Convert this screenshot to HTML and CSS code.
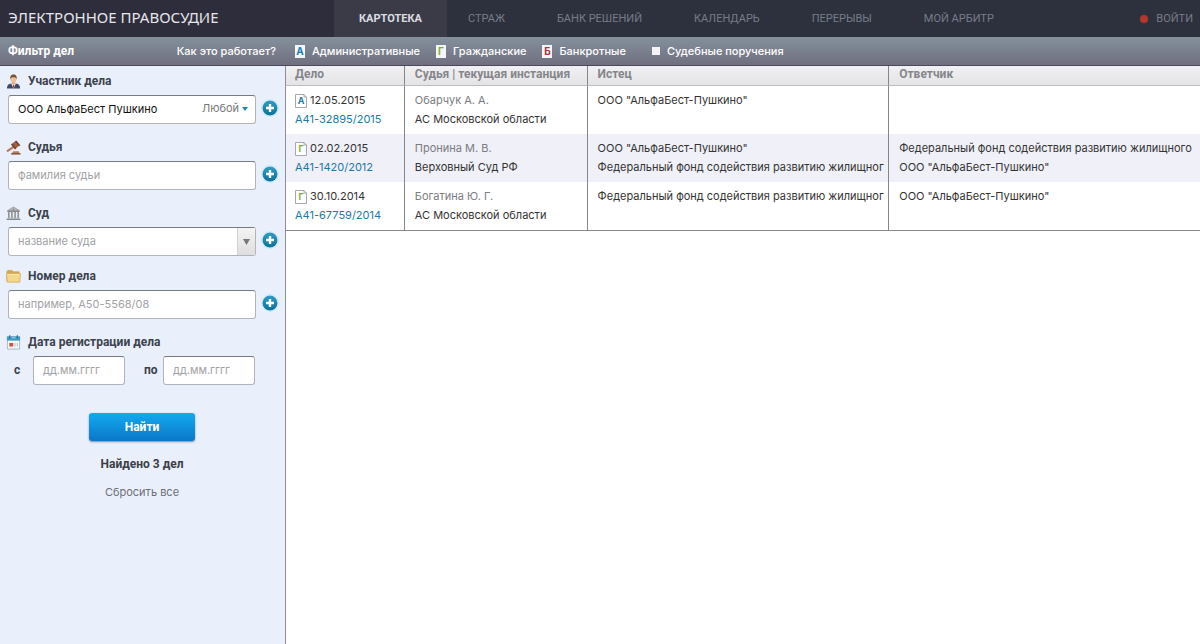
FILE: index.html
```html
<!DOCTYPE html>
<html lang="ru">
<head>
<meta charset="utf-8">
<title>Электронное правосудие — Картотека</title>
<link rel="stylesheet" href="styles.css">
</head>
<body>
<svg class="defs" aria-hidden="true">
  <defs>
    <linearGradient id="plus-fill" x1="0" y1="0" x2="0" y2="1">
      <stop offset="0" stop-color="#2f9cc6"/><stop offset="1" stop-color="#0b7299"/>
    </linearGradient>
    <symbol id="plus" viewBox="0 0 16 16">
      <circle cx="8" cy="8" r="7.500" fill="url(#plus-fill)"/>
      <path d="M8 4v8M4 8h8" stroke="#fff" stroke-width="2.400"/>
    </symbol>
    <symbol id="page" viewBox="0 0 12 14">
      <path d="M.5.5H9L11.500 3v10.500H.5z" fill="#fff" stroke="#a3a9ad"/>
      <path d="M9 .5V3h2.500" fill="none" stroke="#a3a9ad"/>
    </symbol>
  </defs>
</svg>

<header class="top">
  <a class="brand" href="#">ЭЛЕКТРОННОЕ ПРАВОСУДИЕ</a>
  <nav class="nav">
    <a class="nav-item active" href="#">КАРТОТЕКА</a>
    <a class="nav-item" href="#">СТРАЖ</a>
    <a class="nav-item" href="#">БАНК РЕШЕНИЙ</a>
    <a class="nav-item" href="#">КАЛЕНДАРЬ</a>
    <a class="nav-item" href="#">ПЕРЕРЫВЫ</a>
    <a class="nav-item" href="#">МОЙ АРБИТР</a>
  </nav>
  <a class="login" href="#">ВОЙТИ</a>
</header>

<div class="bar">
  <div class="bar-side">
    <h1 class="bar-title">Фильтр дел</h1>
    <a class="bar-link" href="#">Как это работает?</a>
  </div>
  <nav class="types">
    <a class="bar-link" href="#"><span class="sheet blue">А</span>Административные</a>
    <a class="bar-link" href="#"><span class="sheet green">Г</span>Гражданские</a>
    <a class="bar-link" href="#"><span class="sheet red">Б</span>Банкротные</a>
    <a class="bar-link orders" href="#"><span class="square"></span>Судебные поручения</a>
  </nav>
</div>

<div class="main">
  <form class="filter">
    <div class="group">
      <label class="label" for="party">
        <svg class="icon" viewBox="0 0 16 16"><path d="M1 15.500c0-4 2-5 4.500-5.500h5c2.500.5 4.500 1.500 4.500 5.500z" fill="#3d4a68"/><path d="M5.500 10h5L8 15.500z" fill="#fff"/><path d="M8 11l1 1.500-1 3-1-3z" fill="#9b3a3a"/><path d="M6.500 8h3v2.500L8 12l-1.500-1.500z" fill="#dca57d"/><ellipse cx="8" cy="5.500" rx="3" ry="3.800" fill="#ecc19b"/><path d="M4.700 6C4 2 5.500.5 8 .5S12 2 11.300 6C11 4 10 3.500 8 3.500S5 4 4.700 6z" fill="#76502f"/></svg>
        Участник дела</label>
      <div class="line">
        <div class="field">
          <input id="party" type="text" value="ООО АльфаБест Пушкино">
          <select class="role" aria-label="Роль участника"><option>Любой</option></select>
          <svg class="caret" viewBox="0 0 6 4"><path d="M0 0h6L3 4z" fill="#2787ad"/></svg>
        </div>
        <button class="add" type="button" aria-label="Добавить участника"><svg viewBox="0 0 16 16"><use href="#plus"/></svg></button>
      </div>
    </div>

    <div class="group">
      <label class="label" for="judge">
        <svg class="icon" viewBox="0 0 16 16"><path d="M8.500 7L1 12.200" stroke="#b67c52" stroke-width="2.400"/><path d="M6 4.200l4.500-3.400 4 5-4.500 3.400z" fill="#9a6044"/><path d="M5.300 4.700l1.500-1 4.300 5.300-1.500 1zM9.600 1.500L11 .4l4.300 5.200L14 6.600z" fill="#75432f"/><path d="M7.500 12h6l1.500 3H6z" fill="#b57f5c"/><path d="M5.500 14.200h10V15.500h-10z" fill="#714331"/></svg>
        Судья</label>
      <div class="line">
        <div class="field"><input id="judge" type="text" placeholder="фамилия судьи"></div>
        <button class="add" type="button" aria-label="Добавить судью"><svg viewBox="0 0 16 16"><use href="#plus"/></svg></button>
      </div>
    </div>

    <div class="group compact">
      <label class="label" for="court">
        <svg class="icon" viewBox="0 0 16 16"><path d="M8 1l6.500 4h-13z" fill="#b9bbbd" stroke="#85888b" stroke-width=".7"/><path d="M1.500 5h13v1.500h-13zM.5 13.500h15V15H.5z" fill="#85888b"/><path d="M3 6.500V13M6.300 6.500V13M9.700 6.500V13M13 6.500V13" stroke="#8f9295" stroke-width="1.700"/><path d="M1.500 12.500h13v1h-13z" fill="#aaadb0"/><circle cx="8" cy="3.400" r=".8" fill="#74777a"/></svg>
        Суд</label>
      <div class="line">
        <div class="field">
          <input id="court" type="text" placeholder="название суда">
          <button class="drop" type="button" aria-label="Список судов"><svg viewBox="0 0 7 6"><path d="M0 0h7L3.500 6z" fill="#777"/></svg></button>
        </div>
        <button class="add" type="button" aria-label="Добавить суд"><svg viewBox="0 0 16 16"><use href="#plus"/></svg></button>
      </div>
    </div>

    <div class="group">
      <label class="label" for="number">
        <svg class="icon" viewBox="0 0 16 16"><path d="M1 13V2.500l1-1h4.500L8 3h6v10z" fill="#d5a94f" stroke="#c39a48" stroke-width=".7"/><path d="M.6 4.800h14.800l-.6 9.200H1.200z" fill="#f3d78b" stroke="#cba14d" stroke-width=".7"/><path d="M1.500 5.700h13" stroke="#fbebb9" stroke-width=".8"/></svg>
        Номер дела</label>
      <div class="line">
        <div class="field"><input id="number" type="text" placeholder="например, А50-5568/08"></div>
        <button class="add" type="button" aria-label="Добавить номер"><svg viewBox="0 0 16 16"><use href="#plus"/></svg></button>
      </div>
    </div>

    <fieldset class="group">
      <legend class="label">
        <svg class="icon" viewBox="0 0 16 16"><path d="M1.500 2h13v13h-13z" fill="#f5f7f8" stroke="#96a8b4" stroke-width=".8"/><path d="M1 1.500h14V6H1z" fill="#409bc4"/><path d="M4 .3v3.200M12 .3v3.200" stroke="#2b6f92" stroke-width="1.300"/><path d="M6 3h4" stroke="#a9d8ee"/><path d="M3.500 8.500h4.200v3.800H3.500z" fill="#c9534d"/><path d="M9 8.500h1.200v3.800H9zM11.500 8.500h1.200v3.800h-1.200z" fill="#bac4ca"/></svg>
        Дата регистрации дела</legend>
      <div class="dates">
        <label for="from">с</label>
        <div class="field"><input id="from" type="text" placeholder="дд.мм.гггг"></div>
        <label for="to">по</label>
        <div class="field"><input id="to" type="text" placeholder="дд.мм.гггг"></div>
      </div>
    </fieldset>

    <div class="actions">
      <button class="submit" type="submit">Найти</button>
      <strong class="found">Найдено 3 дел</strong>
      <button class="reset" type="reset">Сбросить все</button>
    </div>
  </form>

  <main class="results">
    <table class="cases">
      <colgroup><col class="col-case"><col class="col-judge"><col class="col-plaintiff"><col></colgroup>
      <thead>
        <tr><th scope="col">Дело</th><th scope="col">Судья | текущая инстанция</th><th scope="col">Истец</th><th scope="col">Ответчик</th></tr>
      </thead>
      <tbody>
        <tr>
          <td><div class="date"><span class="mark blue"><svg viewBox="0 0 12 14"><use href="#page"/></svg><b>А</b></span>12.05.2015</div><a href="#">А41-32895/2015</a></td>
          <td><div class="judge">Обарчук А. А.</div><div>АС Московской области</div></td>
          <td><div>ООО "АльфаБест-Пушкино"</div></td>
          <td></td>
        </tr>
        <tr>
          <td><div class="date"><span class="mark green"><svg viewBox="0 0 12 14"><use href="#page"/></svg><b>Г</b></span>02.02.2015</div><a href="#">А41-1420/2012</a></td>
          <td><div class="judge">Пронина М. В.</div><div>Верховный Суд РФ</div></td>
          <td><div>ООО "АльфаБест-Пушкино"</div><div>Федеральный фонд содействия развитию жилищног</div></td>
          <td><div>Федеральный фонд содействия развитию жилищного</div><div>ООО "АльфаБест-Пушкино"</div></td>
        </tr>
        <tr>
          <td><div class="date"><span class="mark green"><svg viewBox="0 0 12 14"><use href="#page"/></svg><b>Г</b></span>30.10.2014</div><a href="#">А41-67759/2014</a></td>
          <td><div class="judge">Богатина Ю. Г.</div><div>АС Московской области</div></td>
          <td><div>Федеральный фонд содействия развитию жилищног</div></td>
          <td><div>ООО "АльфаБест-Пушкино"</div></td>
        </tr>
      </tbody>
    </table>
  </main>
</div>
</body>
</html>
```
FILE: styles.css
```css
* { box-sizing: border-box; }

body {
  margin: 0;
  min-height: 100vh;
  display: flex;
  flex-direction: column;
  font: 11px/19px Inter, "Liberation Sans", Arial, sans-serif;
  color: #333;
  background: #fff;
}

a { color: inherit; text-decoration: none; }
input, select, button { font: inherit; color: inherit; margin: 0; padding: 0; border: 0; background: none; }
button { cursor: pointer; }
svg { display: block; }
.defs { position: absolute; width: 0; height: 0; }

/* header */
.top { display: flex; align-items: stretch; height: 37px; background: #2c313d; color: #777c88; font-family: Roboto, sans-serif; line-height: 37px; }
.brand { flex: 0 0 334px; padding-left: 8px; background: #2e2d3b; color: #e6e7ea; font-family: "Noto Sans", "Open Sans", sans-serif; font-size: 15px; line-height: 35px; }
.nav { display: flex; flex: 1; }
.nav-item { padding: 0 26px; white-space: nowrap; }
.nav-item.active { padding: 0 25px; margin-right: -5px; background: #3b3b48; color: #dcdde1; font-weight: bold; }
.login { display: flex; align-items: center; gap: 8px; padding-right: 7px; }
.login::before { content: ""; width: 8px; height: 8px; border-radius: 50%; background: #b5372b; }

/* toolbar */
.bar { display: flex; height: 29px; line-height: 28px; border-bottom: 1px solid #4a4a5b; background: linear-gradient(#84909c, #706f7f); color: #fff; }
.bar-side { flex: 0 0 286px; display: flex; justify-content: space-between; padding: 0 10px 0 8px; }
.bar-title { margin: 0; font: bold 12px/28px Roboto, sans-serif; }
.bar-link { display: flex; align-items: center; gap: 7px; font-weight: 500; white-space: nowrap; }
.types { display: flex; gap: 16px; padding-left: 9px; }
.orders { margin-left: 10px; }
.sheet { width: 10px; height: 13px; background: #f4f6f8; font-size: 10px; font-weight: bold; line-height: 13px; text-align: center; }
.square { width: 8px; height: 8px; background: #f4f4f6; }
.blue { color: #1f7ea8; }
.green { color: #7fae2e; }
.red { color: #b92f35; }

/* filter */
.main { flex: 1; display: flex; }
.filter { flex: 0 0 286px; padding: 5px 7px 0 6px; border-right: 1px solid #8b8e98; background: #eaf0fb; }
.group { margin: 0 0 13px; padding: 0; border: 0; min-width: 0; }
.group.compact { margin-bottom: 10px; }
.label { display: flex; align-items: center; gap: 7px; height: 20px; margin-bottom: 4px; padding: 0; font: bold 12px/20px Roboto, sans-serif; color: #3b424c; }
.icon { width: 15px; height: 15px; }
.line { display: flex; align-items: flex-start; gap: 6px; padding-left: 2px; }
.field { display: flex; align-items: center; flex: 1; min-width: 0; height: 29px; border: 1px solid #b0b4bb; border-top-color: #777b83; border-radius: 3px; background: #fff; }
.field input { flex: 1; min-width: 0; width: 100%; height: 27px; padding: 0 0 2px 9px; color: #111; outline: 0; }
.field input::placeholder { color: #a2a2a6; opacity: 1; }
.role { appearance: none; color: #777; height: 27px; padding-bottom: 2px; }
.caret { width: 6px; height: 4px; margin: 0 7px 2px 2px; }
.drop { display: flex; align-items: center; justify-content: center; width: 18px; height: 27px; border-left: 1px solid #d2d2d5; background: linear-gradient(#f4f4f4, #dedee0); }
.drop svg { width: 7px; height: 6px; }
.add { width: 16px; height: 16px; margin-top: 5px; border-radius: 50%; box-shadow: 0 0 0 1px #c5eaf5; }
.dates { display: flex; align-items: center; padding-right: 2px; color: #3b424c; }
.dates label { flex: 0 0 27px; padding-left: 8px; font: bold 12px/19px Roboto, sans-serif; }
.dates label:nth-of-type(2) { flex-basis: 38px; padding-left: 19px; }
.dates .field { flex: 0 1 92px; }
.actions { display: flex; flex-direction: column; align-items: center; padding: 15px 0 0; }
.submit { width: 106px; height: 28px; border-radius: 3px; background: linear-gradient(#14aaf0, #0a77c8); box-shadow: 0 1px 2px #6d8fab; color: #fff; font: bold 12px/19px Roboto, sans-serif; }
.found { margin-top: 14px; color: #3a3f47; font: bold 12px/19px Roboto, sans-serif; }
.reset { margin-top: 9px; color: #6b6e75; }

/* results */
.results { flex: 1; min-width: 0; }
.cases { width: 100%; table-layout: fixed; border-collapse: separate; border-spacing: 0; border-bottom: 1px solid #8a8a8e; }
.col-case { width: 13%; }
.col-judge { width: 20%; }
.col-plaintiff { width: 33%; }
.cases th { height: 20px; padding: 0 0 2px 9px; border-bottom: 1px solid #bcbcc2; background: linear-gradient(#f1f1f4, #e4e4e7); color: #86868a; font: bold 12px/17px Roboto, sans-serif; text-align: left; white-space: nowrap; }
.cases td { height: 48px; padding: 5px 0 5px 10px; vertical-align: top; white-space: nowrap; overflow: hidden; }
.cases th + th { padding-left: 10px; }
.cases td:first-child { padding-left: 9px; }
.cases th:not(:last-child), .cases td:not(:last-child) { border-right: 1px solid #85868c; }
.cases tbody tr:nth-child(even) { background: #f0f0f8; }
.cases a { color: #1c78a8; }
.date { display: flex; align-items: center; gap: 3px; }
.judge { color: #7b7b80; }
.mark { display: grid; width: 12px; height: 14px; place-items: center; }
.mark > * { grid-area: 1 / 1; }
.mark svg { width: 12px; height: 14px; }
.mark b { font-size: 9px; line-height: 14px; }
```
